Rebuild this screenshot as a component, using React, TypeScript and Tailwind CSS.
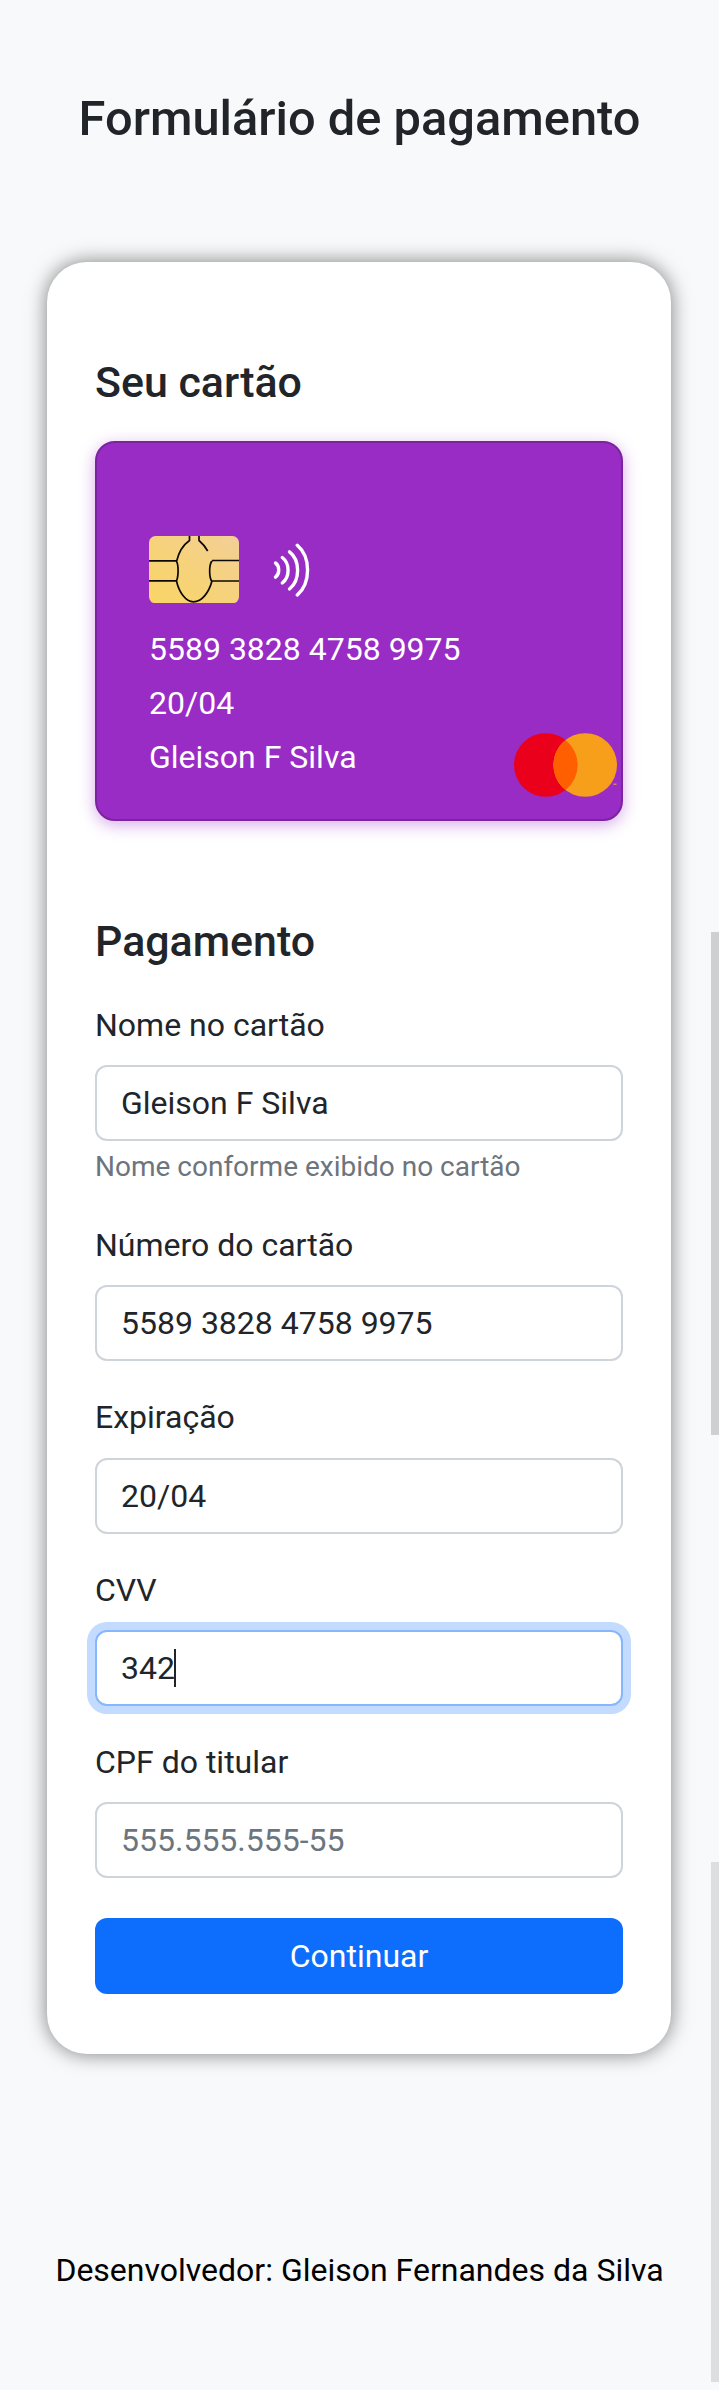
import React from "react";

function Chip() {
  return (
    <svg width="90" height="67" viewBox="0 0 90 67" fill="none" className="block">
      <defs>
        <linearGradient id="gold" x1="0" y1="1" x2="1" y2="0">
          <stop offset="0" stopColor="#fad565" />
          <stop offset="0.5" stopColor="#f6d27c" />
          <stop offset="1" stopColor="#f3cf98" />
        </linearGradient>
      </defs>
      <rect width="90" height="67.3" rx="6.5" fill="url(#gold)" />
      <g stroke="#0c0804" strokeWidth="1.7" strokeLinejoin="round">
        <path d="M40.5 0V4.5C34 9 29.5 17 27.5 25.5C29.5 28 29.7 40 27.5 45C30 56 36.500 65.800 44.500 65.800C53 65.800 60 56 62.800 45.500C60 41 60 30 62.500 25.500H63.500" />
        <path d="M50 0V4.500C53.500 7.500 56.500 11 58.700 15" />
        <path d="M0 24.800H27.500M0 44.800H27.500M63 24.500H90M62.800 45H90" />
      </g>
    </svg>
  );
}

function Contactless() {
  return (
    <svg width="38" height="54" viewBox="0 0 38 54" fill="none" stroke="#fff" strokeWidth="3.4" strokeLinecap="round" className="block">
      <path d="M2.500 20C6.800 23 6.800 31 2.500 34.200" />
      <path d="M9.300 14.500C17 20.500 17 34 9.300 40" />
      <path d="M16.500 8.800C27.300 17 27.300 37.500 16.500 46" />
      <path d="M24.300 2.200C38 14 38 40 24.300 52" />
    </svg>
  );
}

function Mastercard() {
  return (
    <svg width="104" height="64" viewBox="0 0 104 64" className="block">
      <circle cx="31.800" cy="32" r="31.800" fill="#eb001b" />
      <circle cx="71.200" cy="32" r="31.800" fill="#f79e1b" />
      <path d="M51.500 7a31.800 31.800 0 0 1 0 50a31.800 31.800 0 0 1 0-50z" fill="#ff5f00" />
      <path d="M99.500 50.500h3v1.500h-3z" fill="#d98a58" />
    </svg>
  );
}

const label = "block h-12 text-[32px] leading-[48px]";
const control =
  "flex h-[76px] items-center rounded-[12px] border-2 bg-white px-6 text-[32px] leading-[48px]";

function Field({ name, value, muted, className = "" }: { name: string; value: string; muted?: boolean; className?: string }) {
  return (
    <div className={`flex flex-col ${className}`}>
      <span className={label}>{name}</span>
      <div className={`${control} border-[#ced4da] ${muted ? "text-[#6c757d]" : ""}`}>{value}</div>
    </div>
  );
}

export default function App() {
  return (
    <div className="relative h-[2390px] w-[719px] overflow-hidden bg-[#f8f9fa] font-[Roboto,sans-serif] text-[#212529]">
      <h1 className="pt-[90px] text-center text-[48.8px] leading-[58px] font-medium">Formulário de pagamento</h1>

      <main className="mt-[114px] mr-[48px] ml-[47px] h-[1792px] rounded-[40px] bg-white px-12 pt-[94px] shadow-[0_0_20px_rgba(0,0,0,0.5)]">
        <h2 className="text-[42.9px] leading-[52px] font-medium">Seu cartão</h2>

        <section className="mt-[33px] flex h-[380px] flex-col rounded-[20px] border-2 border-[#7b249f] bg-[#982cc5] pr-[3px] pl-[52px] text-[32px] leading-[54px] text-white shadow-[0_4px_16px_rgba(152,44,197,0.4)]">
          <div className="mt-[93px] flex items-center gap-[34px]">
            <Chip />
            <Contactless />
          </div>
          <div className="mt-[19px] flex items-start justify-between">
            <div className="whitespace-nowrap">
              <p>5589 3828 4758 9975</p>
              <p>20/04</p>
              <p>Gleison F Silva</p>
            </div>
            <div className="mt-[111px] shrink-0">
              <Mastercard />
            </div>
          </div>
        </section>

        <h2 className="mt-[94px] text-[42.9px] leading-[52px] font-medium">Pagamento</h2>

        <Field name="Nome no cartão" value="Gleison F Silva" className="mt-[34px] gap-4" />
        <p className="mt-[5px] text-[28px] leading-[42px] text-[#6c757d]">Nome conforme exibido no cartão</p>
        <Field name="Número do cartão" value="5589 3828 4758 9975" className="mt-[33px] gap-4" />
        <Field name="Expiração" value="20/04" className="mt-[32px] gap-[17px]" />
        <div className="mt-[32px] flex flex-col gap-4">
          <span className={label}>CVV</span>
          <div className={`${control} border-[#86b7fe] shadow-[0_0_0_8px_#c2dbfe]`}>
            <span>342</span>
            <span className="-ml-px h-[38px] w-[2px] bg-[#212529]" />
          </div>
        </div>
        <Field name="CPF do titular" value="555.555.555-55" muted className="mt-[32px] gap-4" />
        <button className="mt-10 block h-[76px] w-full rounded-[12px] bg-[#0d6efd] text-[32px] leading-[48px] text-white">
          Continuar
        </button>
      </main>

      <footer className="mt-[192px] text-center text-[32px] leading-[48px] text-black">
        Desenvolvedor: Gleison Fernandes da Silva
      </footer>

      <div className="absolute top-[932px] right-0 h-[503px] w-[8px] bg-[#cfd0d1]" />
      <div className="absolute top-[1862px] right-0 h-[520px] w-[8px] bg-[#dddedf]" />
    </div>
  );
}
